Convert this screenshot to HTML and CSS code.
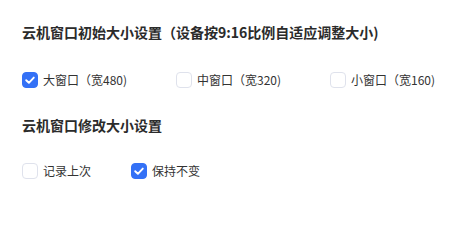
FILE: index.html
```html
<!DOCTYPE html>
<html lang="zh-CN">
<head>
<meta charset="utf-8">
<link rel="stylesheet" href="styles.css">
</head>
<body>
<div class="panel">
  <section class="group">
    <h3 class="title">云机窗口初始大小设置（设备按9:16比例自适应调整大小)</h3>
    <div class="options options-wide">
      <label class="option"><span class="box checked"><svg viewBox="0 0 16 16" width="16" height="16"><path d="M4.2 8.2 L6.9 10.8 L11.8 5.6" fill="none" stroke="#fff" stroke-width="1.9" stroke-linecap="round" stroke-linejoin="round"/></svg></span><span class="text">大窗口（宽480)</span></label>
      <label class="option"><span class="box"></span><span class="text">中窗口（宽320)</span></label>
      <label class="option"><span class="box"></span><span class="text">小窗口（宽160)</span></label>
    </div>
  </section>
  <section class="group group-second">
    <h3 class="title">云机窗口修改大小设置</h3>
    <div class="options options-narrow">
      <label class="option"><span class="box"></span><span class="text">记录上次</span></label>
      <label class="option"><span class="box checked"><svg viewBox="0 0 16 16" width="16" height="16"><path d="M4.2 8.2 L6.9 10.8 L11.8 5.6" fill="none" stroke="#fff" stroke-width="1.9" stroke-linecap="round" stroke-linejoin="round"/></svg></span><span class="text">保持不变</span></label>
    </div>
  </section>
</div>
</body>
</html>
```
FILE: styles.css
```css
html, body {
  margin: 0;
  padding: 0;
  background: #ffffff;
}

body {
  font-family: "Noto Sans CJK SC", "Noto Sans", sans-serif;
  color: #333333;
}

.panel {
  padding: 22px 22px 0 22px;
}

.group-second {
  margin-top: 25px;
}

.title {
  margin: 0;
  font-size: 14px;
  line-height: 20px;
  font-weight: 700;
  color: #2b2b2b;
}

.options {
  display: grid;
  margin-top: 28px;
  height: 20px;
  align-items: center;
}

.group-second .options {
  margin-top: 26px;
}

.options-wide {
  grid-template-columns: 154px 154px 154px;
}

.options-narrow {
  grid-template-columns: 109px 109px;
}

.option {
  display: flex;
  align-items: center;
  gap: 5px;
  font-size: 12px;
  line-height: 20px;
  color: #333333;
}

.box {
  box-sizing: border-box;
  width: 16px;
  height: 16px;
  border: 1px solid #dfe2ec;
  border-radius: 4px;
  background: #ffffff;
  display: flex;
  align-items: center;
  justify-content: center;
  flex: none;
}

.box.checked {
  border-color: #3471f6;
  background: #3471f6;
}

.box svg {
  display: block;
  margin: -1px;
}
```
